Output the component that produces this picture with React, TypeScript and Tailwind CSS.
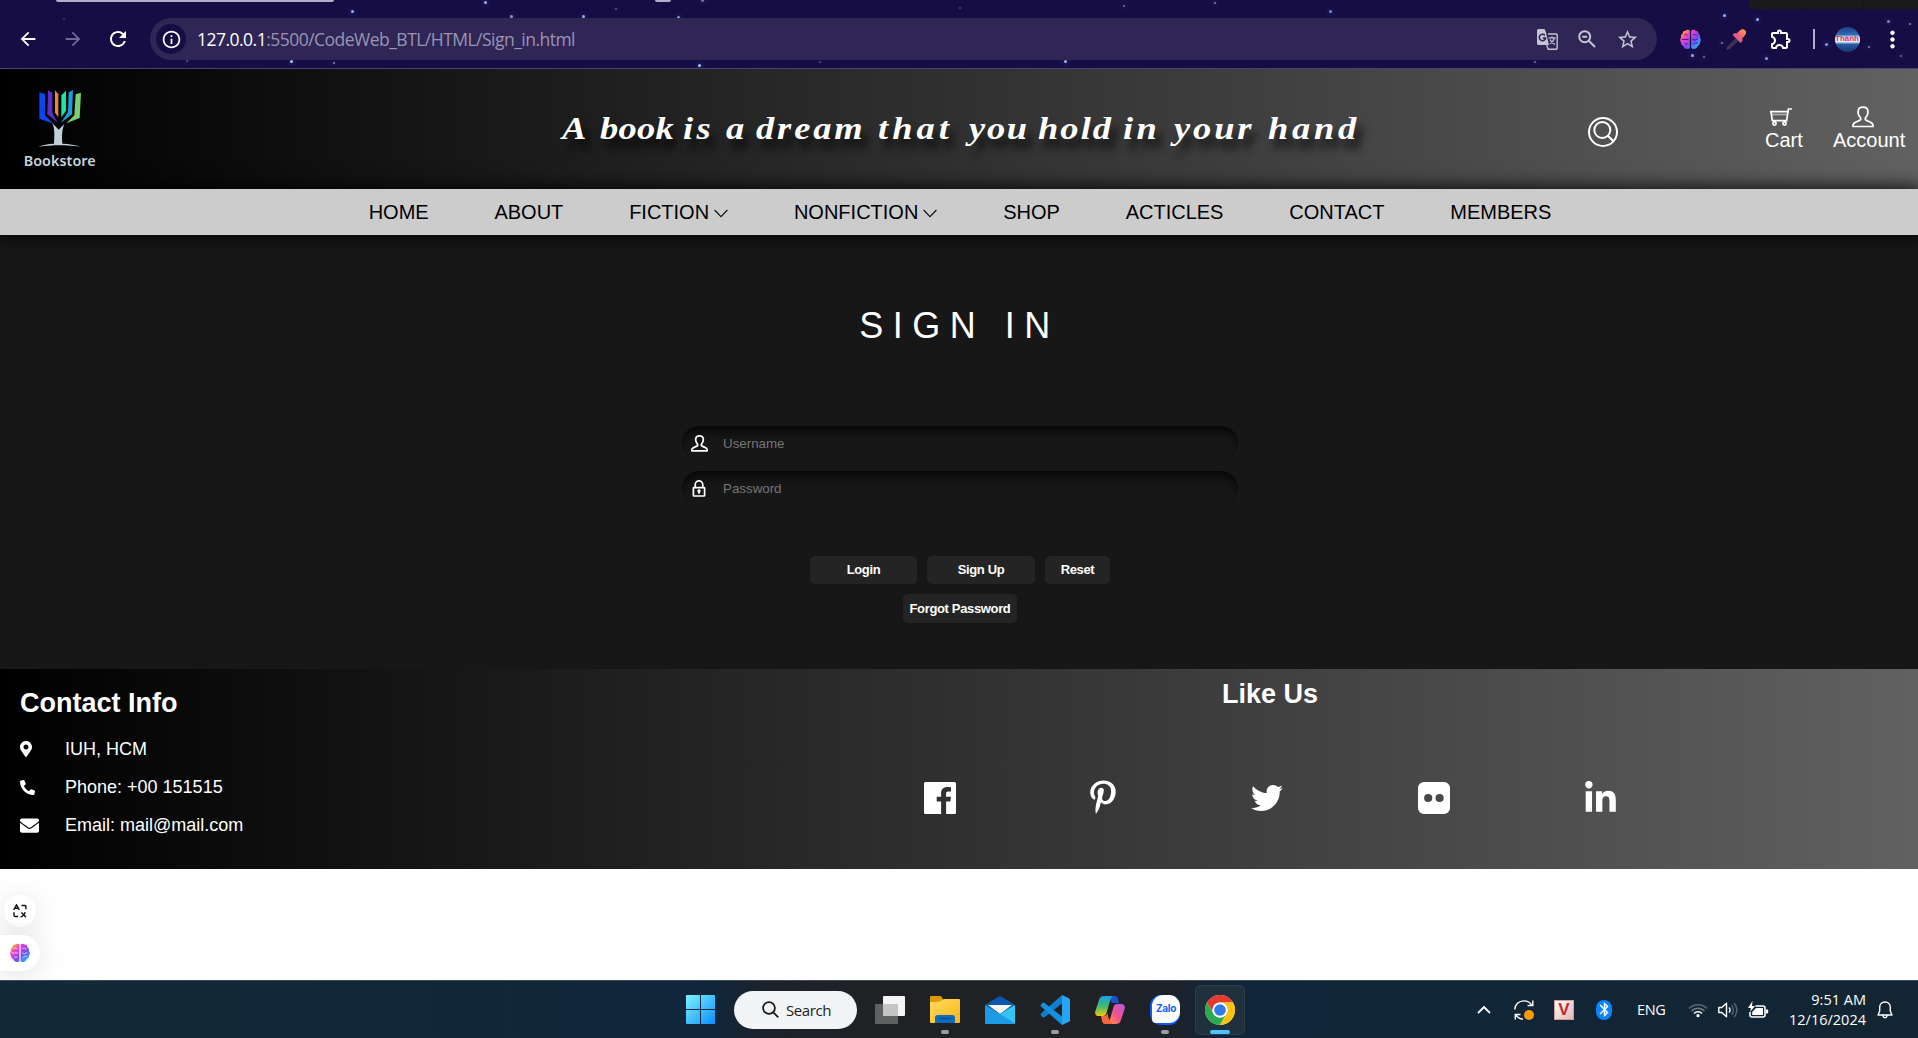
import type { ReactNode } from "react";
import {
  FaMapMarkerAlt,
  FaPhone,
  FaEnvelope,
  FaPinterestP,
  FaTwitter,
  FaLinkedinIn,
} from "react-icons/fa";
import {
  MdArrowBack,
  MdArrowForward,
  MdRefresh,
  MdOutlineInfo,
  MdStarBorder,
  MdOutlineExtension,
  MdMoreVert,
  MdBluetooth,
} from "react-icons/md";

const stars: [number, number, number, number][] = [
  [352, 11, 3, 0.8], [485, 2, 3, 0.8], [511, 16, 3, 0.7], [583, 16, 3, 0.8], [616, 9, 2, 0.4],
  [678, 17, 3, 0.7], [702, 0, 3, 0.5], [291, 61, 3, 0.9], [334, 63, 2, 0.6], [187, 61, 2, 0.4],
  [699, 65, 3, 0.9], [1065, 61, 3, 0.8], [1124, 6, 2, 0.5], [1215, 3, 2, 0.6], [1330, 11, 3, 0.6],
  [1535, 62, 2, 0.5], [1724, 15, 3, 0.8], [1757, 19, 3, 0.8], [1722, 43, 2, 0.6], [1692, 55, 3, 0.8],
  [1704, 57, 2, 0.5], [1766, 58, 3, 0.7], [1826, 44, 3, 0.7], [1869, 47, 2, 0.6], [1888, 21, 3, 0.6],
  [1910, 24, 2, 0.6], [1901, 56, 2, 0.5], [64, 19, 2, 0.2], [960, 8, 2, 0.3], [820, 62, 2, 0.3],
];

function Brain({ size, id }: { size: number; id: string }) {
  return (
    <svg width={size} height={size} viewBox="0 0 20 20">
      <defs>
        <linearGradient id={id} x1="0" y1="0" x2="1" y2="1">
          <stop offset="0.1" stopColor="#ffb020" />
          <stop offset="0.32" stopColor="#f43fd0" />
          <stop offset="0.6" stopColor="#7a4cf5" />
          <stop offset="0.9" stopColor="#22b8ff" />
        </linearGradient>
      </defs>
      <path
        fill={`url(#${id})`}
        d="M9.4 1.6C8.600.5 6.300.4 5.300 1.600 3.500 1.500 2.300 3 2.500 4.500 1 5.300.6 7 1 8.300-.2 9.500-.2 11.500 1 12.700c-.2 1.600.8 3 2.200 3.400.5 2 2.300 3 3.800 2.800 1 .3 2-.2 2.400-1zM10.600 1.600c.8-1.100 3.100-1.200 4.100 0 1.800-.1 3 1.400 2.800 2.900 1.500.8 1.900 2.500 1.500 3.800 1.200 1.200 1.200 3.200 0 4.400.2 1.600-.8 3-2.200 3.400-.5 2-2.300 3-3.800 2.800-1 .3-2-.2-2.400-1z"
      />
      <path
        fill="none"
        stroke={id === "brain-toolbar" ? "#170d45" : "#fff"}
        strokeOpacity="0.75"
        strokeWidth="0.9"
        d="M1.500 10h6.500M4.200 5.500c1.600-.8 2.600 0 2.900.8M4.200 13.600c1.400 1.500 2.600.6 3.200.2M12.500 5.800c1.600-1.600 2.800 0 4 .8M12.200 9.800l2 1 2.600-1.500M12.500 14.800l2.600-1.800 1.700.6"
      />
    </svg>
  );
}

function Person({ size, stroke }: { size: number; stroke: number }) {
  return (
    <svg width={size} height={size} viewBox="0 0 22 22" fill="none" stroke="#fff" strokeWidth={stroke} strokeLinejoin="round">
      <path d="M1 20.500v-1.200c0-1.700 1.300-2.600 3-3.300l3.600-1.600c1.300-.5 1.400-1.600.8-2.600-2-2.400-2.700-5.600-2-8C6.900 2 8.700 1.200 11 1.200S15.100 2 15.600 3.800c.7 2.400 0 5.600-2 8-.6 1-.5 2.100.8 2.600L18 16c1.700.7 3 1.600 3 3.300v1.200z" />
    </svg>
  );
}

function Lock() {
  return (
    <svg width="14" height="17" viewBox="0 0 14 17" fill="none" stroke="#fff" strokeWidth="1.700">
      <rect x="1.400" y="7.600" width="11.200" height="8.400" rx="0.6" />
      <path d="M3.200 7.600V4.800a3.800 4 0 0 1 7.600 0v2.800" />
      <circle cx="7" cy="11" r="0.8" fill="#fff" />
      <path d="M7 11v2.800" />
    </svg>
  );
}

function Translate() {
  return (
    <svg width="21" height="21" viewBox="0 0 21 21">
      <path d="M11 5h8.200a1 1 0 0 1 1 1v13.200a1 1 0 0 1-1 1h-8l-1.500-4" fill="none" stroke="#c6c4d2" strokeWidth="1.400" />
      <path d="M1.500 0H7.500l1.300 2.800L12 16H1.500A1.500 1.500 0 0 1 0 14.500v-13A1.500 1.500 0 0 1 1.500 0z" fill="#c6c4d2" />
      <path d="M7.900 6.400A3.200 3.200 0 1 0 8.600 9H5.700" fill="none" stroke="#2f2656" strokeWidth="1.500" />
      <path d="M11.500 8.800h7.300M15 7.200v1.600M17.300 8.800c-.5 2.500-2.300 4.700-4.500 6M13 10.500c.8 2 2.500 3.700 5 5" fill="none" stroke="#c6c4d2" strokeWidth="1.200" />
    </svg>
  );
}

function Cell({ className, children }: { className: string; children?: ReactNode }) {
  return <div className={`flex shrink-0 items-center justify-center ${className}`}>{children}</div>;
}

function BrowserBar() {
  return (
    <div className="relative h-[69px] shrink-0 overflow-hidden border-b border-[#4a4178] bg-[#170d45]">
      {stars.map(([x, y, s, o], i) => (
        <span
          key={i}
          className="absolute rounded-full bg-[#c9d4ff] shadow-[0_0_5px_1px_#22358c]"
          style={{ left: x - 1, top: y - 1, width: s, height: s, opacity: o }}
        />
      ))}
      <span className="absolute top-0 left-[56px] h-[2px] w-[278px] rounded-b-full bg-[#b3aec9]" />
      <span className="absolute top-0 left-[655px] h-[2px] w-[16px] rounded-b-full bg-[#b3aec9]" />
      <div className="absolute top-0 right-0 flex h-[9px] w-[169px] gap-px">
        <span className="w-[56px] bg-[#1a1a1a]" />
        <span className="w-[57px] bg-[#1a1a1a]" />
        <span className="flex-1 bg-[#1a1a1a]" />
      </div>
      <div className="relative mt-[18px] flex h-[42px] items-center pl-[5px] text-white">
        <Cell className="w-[45px]"><MdArrowBack size={22} /></Cell>
        <Cell className="w-[45px] text-[#6f6894]"><MdArrowForward size={22} /></Cell>
        <Cell className="w-[45px]"><MdRefresh size={24} /></Cell>
        <div className="ml-[10px] flex h-[42px] w-[1507px] items-center rounded-full bg-[#2f2656] pr-[10px] pl-[6px]">
          <Cell className="h-[30px] w-[30px] rounded-full bg-[#170d45]"><MdOutlineInfo size={21} /></Cell>
          <p className="ml-[11px] flex-1 font-['Open_Sans','Noto_Sans',sans-serif] text-[17.500px] tracking-[-0.520px] whitespace-nowrap text-[#9a94b4]">
            <span className="text-white">127.0.0.1</span>:5500/CodeWeb_BTL/HTML/Sign_in.html
          </p>
          <Cell className="w-[40px]"><Translate /></Cell>
          <Cell className="w-[40px]">
            <svg width="18" height="18" viewBox="0 0 18 18" fill="none" stroke="#c6c4d2" strokeWidth="2">
              <circle cx="6.700" cy="6.700" r="5.500" />
              <path d="M10.800 10.800l6.200 6.200M4.200 6.700h5" />
            </svg>
          </Cell>
          <Cell className="w-[40px] text-[#c6c4d2]"><MdStarBorder size={23} /></Cell>
        </div>
        <Cell className="ml-[10px] w-[46px]"><Brain size={21} id="brain-toolbar" /></Cell>
        <Cell className="w-[46px]">
          <svg width="21" height="21" viewBox="0 0 21 21">
            <defs>
              <linearGradient id="dropper" x1="1" y1="0" x2="0" y2="1">
                <stop offset="0" stopColor="#ffa13a" />
                <stop offset="0.5" stopColor="#f0607a" />
                <stop offset="1" stopColor="#a44bd0" />
              </linearGradient>
            </defs>
            <path d="M10 9.500L2 17.500.8 20.400l3.300-1.300L12 11.500z" fill="#3b3252" stroke="#5b4a66" strokeWidth="0.6" />
            <path d="M6.500 6l2-2 2 .6L14 1.200c2-1.600 4.600-1 5.500.6.9 1.700.6 3.500-.7 4.800l-2.600 2.900.4 2.500-2 2z" fill="url(#dropper)" />
          </svg>
        </Cell>
        <Cell className="w-[44px]"><MdOutlineExtension size={24} /></Cell>
        <Cell className="w-[22px]"><span className="h-[20px] w-[2px] bg-[#b3aec9]" /></Cell>
        <Cell className="w-[44px]">
          <span className="flex h-[25px] w-[25px] items-center justify-center overflow-hidden rounded-full bg-[linear-gradient(#1d3f86,#2e6bb0_30%,#dfe9f5_42%,#e9eef7_58%,#2459a4_70%,#16356f)] font-['Liberation_Sans',sans-serif] text-[8px] font-bold text-[#d8345c]">
            Thành
          </span>
        </Cell>
        <Cell className="w-[46px]"><MdMoreVert size={27} /></Cell>
      </div>
    </div>
  );
}

function Logo() {
  return (
    <svg className="shrink-0 translate-y-px" width="160" height="120" viewBox="0 0 480 360">
      <path d="M118 67l17 5v64l25 25-42-15z" fill="#0b46f0" />
      <path d="M144 61l13 7v61l16 29-31-26z" fill="#5a2fc9" />
      <path d="M165 61l10 12v69l-10-14z" fill="#f0813e" />
      <path d="M198 62l-14 14v66l14-20z" fill="#19e79b" />
      <path d="M219 60l-13 7-2 59-22 33 34-26z" fill="#169fdd" />
      <path d="M243 68l-16 5-4 63-24 24 40-16z" fill="#79d070" />
      <path d="M157 159l19 20 17-17c-6 17-8 29-6 59 20 1 40 3 54 9-40-6-84-6-125 0 12-6 28-8 46-9 2-26 2-46-5-62z" fill="#c0d0db" />
      <text x="71" y="288" textLength="216" fontSize="43" fontWeight="600" fill="#c5d3dc" fontFamily="'Noto Sans','Open Sans',sans-serif">
        Bookstore
      </text>
    </svg>
  );
}

const slogan: [string, string, string][] = [
  ["A", "w-[38px]", "tracking-normal"],
  ["book", "w-[83px]", "tracking-[0.200px]"],
  ["is", "w-[43px]", "tracking-[3px]"],
  ["a", "w-[30px]", "tracking-normal"],
  ["dream", "w-[122px]", "tracking-[2.500px]"],
  ["that", "w-[91px]", "tracking-[3.500px]"],
  ["you", "w-[69px]", "tracking-[1.500px]"],
  ["hold", "w-[85px]", "tracking-[1.800px]"],
  ["in", "w-[51px]", "tracking-[3px]"],
  ["your", "w-[94px]", "tracking-[2.500px]"],
  ["hand", "w-[92px]", "tracking-[3.300px]"],
];

function Header() {
  return (
    <header className="flex h-[120px] shrink-0 items-start bg-[linear-gradient(to_right,#000,#616161)] text-[20px] text-white">
      <Logo />
      <h1 className="mt-[37px] ml-[402px] flex font-['Brush_Script_MT','Liberation_Serif',serif] text-[32px] leading-[44px] font-bold italic [text-shadow:5px_10px_8px_rgba(0,0,0,0.75)]">
        {slogan.map(([word, width, spacing], i) => (
          <span key={i} className={`inline-block shrink-0 ${width}`}>
            <span className={`inline-block origin-left scale-x-[1.14] ${spacing}`}>{word}</span>
          </span>
        ))}
      </h1>
      <svg className="mt-[47px] ml-[227px] shrink-0" width="32" height="32" viewBox="0 0 32 32" fill="none" stroke="#fff" strokeWidth="2">
        <circle cx="16" cy="16" r="14" />
        <circle cx="15.300" cy="14" r="8" />
        <path d="M20.500 19.500l6 5.800" />
      </svg>
      <div className="mt-[39px] ml-[146px] flex w-[38px] flex-col items-start leading-[23px]">
        <svg className="mb-[3px] ml-[5px]" width="23" height="18" viewBox="0 0 23 18" fill="none" stroke="#fff" strokeWidth="1.700">
          <path d="M0 3.700h18M1 3.700l1.300 9h14.300L18.400 1h3.600" />
          <path d="M2 6.500h15.500" strokeOpacity="0.5" />
          <circle cx="4.500" cy="15.500" r="1.600" />
          <circle cx="14.500" cy="15.500" r="1.600" />
        </svg>
        <span>Cart</span>
      </div>
      <div className="mt-[37px] ml-[30px] flex flex-col items-start leading-[23px]">
        <span className="mb-px ml-[19px]"><Person size={22} stroke={1.7} /></span>
        <span>Account</span>
      </div>
    </header>
  );
}

function Nav() {
  const items = ["HOME", "ABOUT", "FICTION", "NONFICTION", "SHOP", "ACTICLES", "CONTACT", "MEMBERS"];
  return (
    <nav className="relative flex h-[46px] shrink-0 items-center justify-center gap-[65.800px] bg-[#ccc] pl-[2px] text-[20px] text-black shadow-[0_0_16px_3px_rgba(0,0,0,0.8)]">
      {items.map((item) => (
        <span key={item} className="flex items-center gap-[5px]">
          {item}
          {item.endsWith("FICTION") && (
            <svg className="mt-[3px]" width="14" height="9" viewBox="0 0 14 9" fill="none" stroke="#111" strokeWidth="1.200">
              <path d="M.6 1L7 7.600 13.400 1" />
            </svg>
          )}
        </span>
      ))}
    </nav>
  );
}

function Field({ icon, label }: { icon: ReactNode; label: string }) {
  return (
    <label className="flex h-[35px] w-[556px] items-center rounded-[17px] shadow-[inset_0_7px_9px_-1px_rgba(0,0,0,0.65)]">
      <Cell className="ml-[8px] w-[18px]">{icon}</Cell>
      <input
        placeholder={label}
        className="ml-[15px] flex-1 bg-transparent text-[13.330px] text-white outline-none placeholder:text-[#757575]"
      />
    </label>
  );
}

function SignIn() {
  const button =
    "flex items-center justify-center rounded-[5px] bg-[#242424] text-[13px] font-bold tracking-[-0.350px] text-white";
  return (
    <main className="flex h-[434px] shrink-0 flex-col items-center bg-[#171717] pl-[2px] text-white">
      <h2 className="mt-[70px] mr-[1px] text-[36px] leading-[41px] tracking-[9.500px]">SIGN IN</h2>
      <div className="mt-[80px] flex flex-col gap-[10px]">
        <Field icon={<Person size={17} stroke={2.2} />} label="Username" />
        <Field icon={<Lock />} label="Password" />
      </div>
      <div className="mt-[50px] flex gap-[10px]">
        <button className={`${button} h-[28px] w-[107px]`}>Login</button>
        <button className={`${button} h-[28px] w-[108px]`}>Sign Up</button>
        <button className={`${button} h-[28px] w-[65px]`}>Reset</button>
      </div>
      <button className={`${button} mt-[10px] h-[29px] w-[114px]`}>Forgot Password</button>
    </main>
  );
}

function Footer() {
  const rows: [ReactNode, string][] = [
    [<FaMapMarkerAlt size={16} className="-ml-[2px]" />, "IUH, HCM"],
    [<FaPhone size={15} className="-scale-x-100" />, "Phone: +00 151515"],
    [<FaEnvelope size={19} />, "Email: mail@mail.com"],
  ];
  return (
    <footer className="flex h-[200px] shrink-0 bg-[linear-gradient(to_right,#000,#616161)] text-white">
      <div className="w-[610px] shrink-0 pt-[18px] pl-[20px]">
        <h3 className="text-[27px] leading-[32px] font-bold">Contact Info</h3>
        <ul className="mt-[11px] text-[18px] leading-[38px]">
          {rows.map(([icon, text]) => (
            <li key={text} className="flex items-center">
              <span className="w-[45px]">{icon}</span>
              {text}
            </li>
          ))}
        </ul>
      </div>
      <div className="ml-[246px] w-[828px] pt-[9px] text-center">
        <h3 className="text-[27px] leading-[32px] font-bold">Like Us</h3>
        <div className="mt-[68px] flex h-[40px] items-center">
          <Cell className="w-[167px]">
            <svg width="32" height="32" viewBox="0 0 32 32" fill="#fff">
              <path d="M1.500 0h29A1.500 1.500 0 0 1 32 1.500v29a1.500 1.500 0 0 1-1.500 1.500h-8.400V19.400h4.300l.6-4.700h-4.900v-3c0-1.400.4-2.300 2.400-2.300h2.500V5.200a32 32 0 0 0-3.700-.2c-3.700 0-6.200 2.200-6.200 6.300v3.400h-4.400v4.700h4.400V32H1.500A1.500 1.500 0 0 1 0 30.500v-29A1.500 1.500 0 0 1 1.500 0z" />
            </svg>
          </Cell>
          <Cell className="w-[160px] pb-[2px]"><FaPinterestP size={34} /></Cell>
          <Cell className="w-[167px]"><FaTwitter size={32} /></Cell>
          <Cell className="w-[168px]">
            <svg width="32" height="32" viewBox="0 0 32 32">
              <path fill="#fff" fillRule="evenodd" d="M6 0h20a6 6 0 0 1 6 6v20a6 6 0 0 1-6 6H6a6 6 0 0 1-6-6V6a6 6 0 0 1 6-6zM10.200 11.900a4.100 4.100 0 1 0 0 8.200 4.100 4.100 0 0 0 0-8.200zm11.400 0a4.100 4.100 0 1 0 0 8.200 4.100 4.100 0 0 0 0-8.200z" />
            </svg>
          </Cell>
          <Cell className="w-[164px]"><FaLinkedinIn size={35} /></Cell>
        </div>
      </div>
    </footer>
  );
}

function FloatingTools() {
  return (
    <div className="flex h-[111px] shrink-0 flex-col overflow-hidden bg-white pt-[26px]">
      <Cell className="ml-[4px] h-[32px] w-[32px] rounded-full bg-white shadow-[0_4px_30px_rgba(0,0,0,0.13)]">
        <svg width="14" height="14" viewBox="0 0 14 14" fill="none" stroke="#111" strokeWidth="1.400">
          <path d="M.7 6L3.500.8 6.300 6M1.600 4.300h3.800M8.500 1.500h3.200a1.200 1.200 0 0 1 1.200 1.200v2.600M1 8.200v3a1.300 1.300 0 0 0 1.300 1.300h2.900M8.500 8.500l4.500 4.800M7.500 13.200c2.200-.8 4.200-2.800 4.600-5" />
        </svg>
      </Cell>
      <div className="relative mt-[8px] flex h-[36px] w-[40px] shrink-0 items-center rounded-r-full bg-white pl-[10px] shadow-[0_4px_30px_rgba(0,0,0,0.13)]">
        <Brain size={20} id="brain-side" />
      </div>
    </div>
  );
}

function AppCell({ running, active, children }: { running?: boolean; active?: boolean; children: ReactNode }) {
  return (
    <div
      className={`relative flex h-[50px] w-[50px] shrink-0 items-center justify-center rounded-[5px] ${
        active ? "border border-[#2e3d4a] bg-[#21303d]" : ""
      }`}
    >
      {children}
      {running && <span className="absolute bottom-[1px] h-[4px] w-[8px] rounded-full bg-[#9a9da1]" />}
      {active && <span className="absolute bottom-0 h-[4px] w-[20px] rounded-full bg-[#4cc2ff]" />}
    </div>
  );
}

function Taskbar() {
  return (
    <div className="flex h-[58px] shrink-0 items-center border-t border-[#3d4c58] bg-[linear-gradient(to_right,#122a36,#10263b_37%,#1c222b_40%,#202125_45%,#202125_57%,#1d2229_61%,#10263a_64%,#132532)] pl-[675px] font-['Open_Sans','Noto_Sans',sans-serif] text-white">
      <AppCell>
        <svg width="29" height="29" viewBox="0 0 29 29">
          <defs>
            <linearGradient id="win" x1="0" y1="0" x2="1" y2="1">
              <stop offset="0" stopColor="#7df2ff" />
              <stop offset="1" stopColor="#0a8fff" />
            </linearGradient>
          </defs>
          <path fill="url(#win)" d="M1 0h13v14H0V1a1 1 0 0 1 1-1zM15 0h13a1 1 0 0 1 1 1v13H15zM0 15h14v14H1a1 1 0 0 1-1-1zM15 15h14v13a1 1 0 0 1-1 1H15z" />
        </svg>
      </AppCell>
      <div className="ml-[9px] flex h-[38px] w-[123px] shrink-0 items-center rounded-full bg-[#f3f4f6] pl-[28px] text-[15px] text-[#1b1b1b]">
        <svg className="mr-[7px] shrink-0" width="17" height="17" viewBox="0 0 17 17" fill="none" stroke="#1b1b1b" strokeWidth="1.800">
          <circle cx="7" cy="7" r="5.900" />
          <path d="M11.300 11.300l5 5" />
        </svg>
        <span className="mt-px tracking-[-0.400px]">Search</span>
      </div>
      <div className="ml-[8px] flex gap-[5px]">
        <AppCell>
          <svg width="30" height="28" viewBox="0 0 30 28">
            <rect x="8" y="0" width="22" height="20" rx="1" fill="#f4f4f4" />
            <rect x="0" y="8" width="23" height="20" rx="1" fill="#6b6b6b" fillOpacity="0.85" />
            <rect x="8" y="8" width="15" height="12" fill="#c4c4c4" />
          </svg>
        </AppCell>
        <AppCell running>
          <svg width="30" height="27" viewBox="0 0 30 27">
            <defs>
              <linearGradient id="folder" x1="0" y1="0" x2="1" y2="1">
                <stop offset="0" stopColor="#ffd964" />
                <stop offset="1" stopColor="#fdb813" />
              </linearGradient>
            </defs>
            <path d="M0 1.200A1.200 1.200 0 0 1 1.200 0h8.600c1 0 1.500.4 2 1.200L13 3v5H0z" fill="#dd9a00" />
            <path d="M0 6c7 0 10 0 12.500-2.200.7-.6 1.300-.8 2-.8H29a1 1 0 0 1 1 1v22a1 1 0 0 1-1 1H1a1 1 0 0 1-1-1z" fill="url(#folder)" />
            <path d="M5 27v-5.500A2.500 2.500 0 0 1 7.500 19h15a2.500 2.500 0 0 1 2.500 2.500V27z" fill="#0f6cbd" />
            <path d="M9 22.500h12" stroke="#0a4a86" strokeWidth="1.200" />
          </svg>
        </AppCell>
        <AppCell>
          <svg width="30" height="28" viewBox="0 0 30 28">
            <path d="M0 9L13.800.6a2.200 2.200 0 0 1 2.400 0L30 9v6H0z" fill="#0a58ab" />
            <path d="M3 9h24l-12 9z" fill="#f3f3f3" />
            <path d="M0 9l15 9L30 9v18a1 1 0 0 1-1 1H1a1 1 0 0 1-1-1z" fill="#1e9be6" />
            <path d="M30 9v18.500L15 18z" fill="#35c3f3" />
          </svg>
        </AppCell>
        <AppCell running>
          <svg width="30" height="30" viewBox="0 0 30 30">
            <path d="M22 0l7 3.200c.6.300 1 .9 1 1.600v20.400c0 .7-.4 1.300-1 1.600L22 30z" fill="#27a5f2" />
            <path d="M22 0L1 18.600c-.6.600-.6 1.400 0 2l1.700 1.600c.5.500 1.200.5 1.700.1L22 8.500z" fill="#0f7fcc" />
            <path d="M22 30L1 11.400c-.6-.6-.6-1.400 0-2l1.700-1.600c.5-.5 1.200-.5 1.700-.1L22 21.500z" fill="#1590dc" />
          </svg>
        </AppCell>
        <AppCell>
          <svg width="30" height="28" viewBox="0 0 30 28">
            <defs>
              <linearGradient id="cp1" x1="0" y1="0" x2="0" y2="1">
                <stop offset="0" stopColor="#1aa0e8" />
                <stop offset="0.5" stopColor="#3fb872" />
                <stop offset="1" stopColor="#f2c811" />
              </linearGradient>
              <linearGradient id="cp2" x1="1" y1="0" x2="0" y2="1">
                <stop offset="0" stopColor="#b558e8" />
                <stop offset="0.5" stopColor="#f0528e" />
                <stop offset="1" stopColor="#ff9a3d" />
              </linearGradient>
            </defs>
            <path d="M13 0h7c2 0 2.500 1.500 3 3l1 4h-7z" fill="#1554c8" />
            <path d="M9 0h9c-2 1-2.500 3-3 5l-3.500 12c-.6 2-1.500 3-3.500 3H4c-3 0-4.500-2-3.600-5L4 4c.8-2.600 2.300-4 5-4z" fill="url(#cp1)" />
            <path d="M21 28h-9c2-1 2.500-3 3-5l3.500-12c.6-2 1.500-3 3.500-3h4c3 0 4.500 2 3.600 5L26 24c-.8 2.600-2.300 4-5 4z" fill="url(#cp2)" />
            <path d="M17 28h-7c-2 0-2.500-1.500-3-3l-1-5h3c2 0 3-1 3.500-3l1 5z" fill="#f4663c" />
          </svg>
        </AppCell>
        <AppCell running>
          <span className="flex h-[30px] w-[30px] items-center justify-center rounded-[11px] bg-[#0a5bff]">
            <span className="flex h-[28px] w-[28px] translate-x-px -translate-y-px items-center justify-center rounded-[11px] rounded-bl-[4px] bg-white font-['Inter',sans-serif] text-[10px] font-bold tracking-[-0.300px] text-[#1066f5]">
              Zalo
            </span>
          </span>
        </AppCell>
        <AppCell active>
          <svg width="30" height="30" viewBox="0 0 48 48">
            <circle cx="24" cy="24" r="24" fill="#fff" />
            <path d="M3.200 12A24 24 0 0 1 44.800 12H24A12 12 0 0 0 13.600 30z" fill="#e33b2e" />
            <path d="M3.200 12A24 24 0 0 0 24 48l10.400-18A12 12 0 0 1 13.600 30z" fill="#2da94f" />
            <path d="M44.800 12A24 24 0 0 1 24 48l10.400-18A12 12 0 0 0 24 12z" fill="#fdc111" />
            <circle cx="24" cy="24" r="12" fill="#fff" />
            <circle cx="24" cy="24" r="9.300" fill="#2f7bea" />
          </svg>
        </AppCell>
      </div>
      <div className="ml-auto flex h-full items-center pr-[25px]">
        <svg width="14" height="9" viewBox="0 0 14 9" fill="none" stroke="#fff" strokeWidth="1.800">
          <path d="M1 8l6-6 6 6" />
        </svg>
        <svg className="ml-[23px]" width="20" height="20" viewBox="0 0 20 20" fill="none" stroke="#fff" strokeWidth="1.400">
          <path d="M.8 9.500C.8 4.500 5 .9 9.800 .9c3.600 0 6.500 1.700 8 4.300M18.800 .5v5h-5.200M1.300 19.500v-5h5.200M1.800 14.800c1.500 2.400 4 4.200 7.200 4.400" />
          <circle cx="15" cy="15" r="5" fill="#ff9a0a" stroke="none" />
        </svg>
        <span className="ml-[20px] flex h-[20px] w-[20px] items-center justify-center border border-[#d59a9a] bg-[linear-gradient(135deg,#fff,#e3b5b5)] font-['Liberation_Sans',sans-serif] text-[17px] font-bold text-[#c22a2e]">
          V
        </span>
        <span className="ml-[22px] flex h-[20px] w-[16px] items-center justify-center rounded-full bg-[#0a84ff]">
          <MdBluetooth size={17} className="shrink-0" />
        </span>
        <span className="ml-[25px] w-[30px] text-[14.500px] tracking-[-0.300px]">ENG</span>
        <svg className="ml-[21px]" width="20" height="16" viewBox="0 0 20 16" fill="none" stroke="#fff" strokeWidth="1.500">
          <path d="M1 6.500a12.500 12.500 0 0 1 18 0" strokeOpacity="0.3" />
          <path d="M3.500 9a9 9 0 0 1 13 0" strokeOpacity="0.4" />
          <path d="M6 11.500a5.500 5.500 0 0 1 8 0" />
          <circle cx="10" cy="13.700" r="1.600" fill="#fff" stroke="none" />
        </svg>
        <svg className="ml-[10px]" width="20" height="16" viewBox="0 0 20 16" fill="none" stroke="#fff" strokeWidth="1.400">
          <path d="M.8 5.500h3L8.500 1.300v13.400L3.800 10.500h-3z" strokeLinejoin="round" />
          <path d="M11 5.500a3.500 3.500 0 0 1 0 5" />
          <path d="M13.500 3.200a7 7 0 0 1 0 9.600M16 1a10 10 0 0 1 0 14" strokeOpacity="0.3" />
        </svg>
        <svg className="ml-[10px]" width="21" height="18" viewBox="0 0 21 18">
          <path d="M7.500 5H15a2 2 0 0 1 2 2v7a2 2 0 0 1-2 2H4a2 2 0 0 1-2-2v-3" fill="none" stroke="#fff" strokeWidth="1.600" />
          <path d="M8 7h7v7H4.200v-3zM18 8.500h1.200a1 1 0 0 1 1 1v2a1 1 0 0 1-1 1H18zM4.500 0L0 7h3L2 11l5-6H4z" fill="#fff" />
        </svg>
        <div className="ml-[17px] w-[80px] text-right text-[14.500px] leading-[20px] whitespace-nowrap">
          <div>9:51 AM</div>
          <div>12/16/2024</div>
        </div>
        <svg className="ml-[11px]" width="16" height="18" viewBox="0 0 16 18" fill="none" stroke="#fff" strokeWidth="1.400" strokeLinejoin="round">
          <path d="M8 1C4.800 1 2.700 3.300 2.700 6.200V10L1 14h14l-1.700-4V6.200C13.300 3.300 11.200 1 8 1zM6 14.500a2 2.200 0 0 0 4 0" />
        </svg>
      </div>
    </div>
  );
}

export default function App() {
  return (
    <div className="flex h-[1038px] w-[1918px] flex-col overflow-hidden bg-white font-['Liberation_Sans',Arial,sans-serif]">
      <BrowserBar />
      <Header />
      <Nav />
      <SignIn />
      <Footer />
      <FloatingTools />
      <Taskbar />
    </div>
  );
}
